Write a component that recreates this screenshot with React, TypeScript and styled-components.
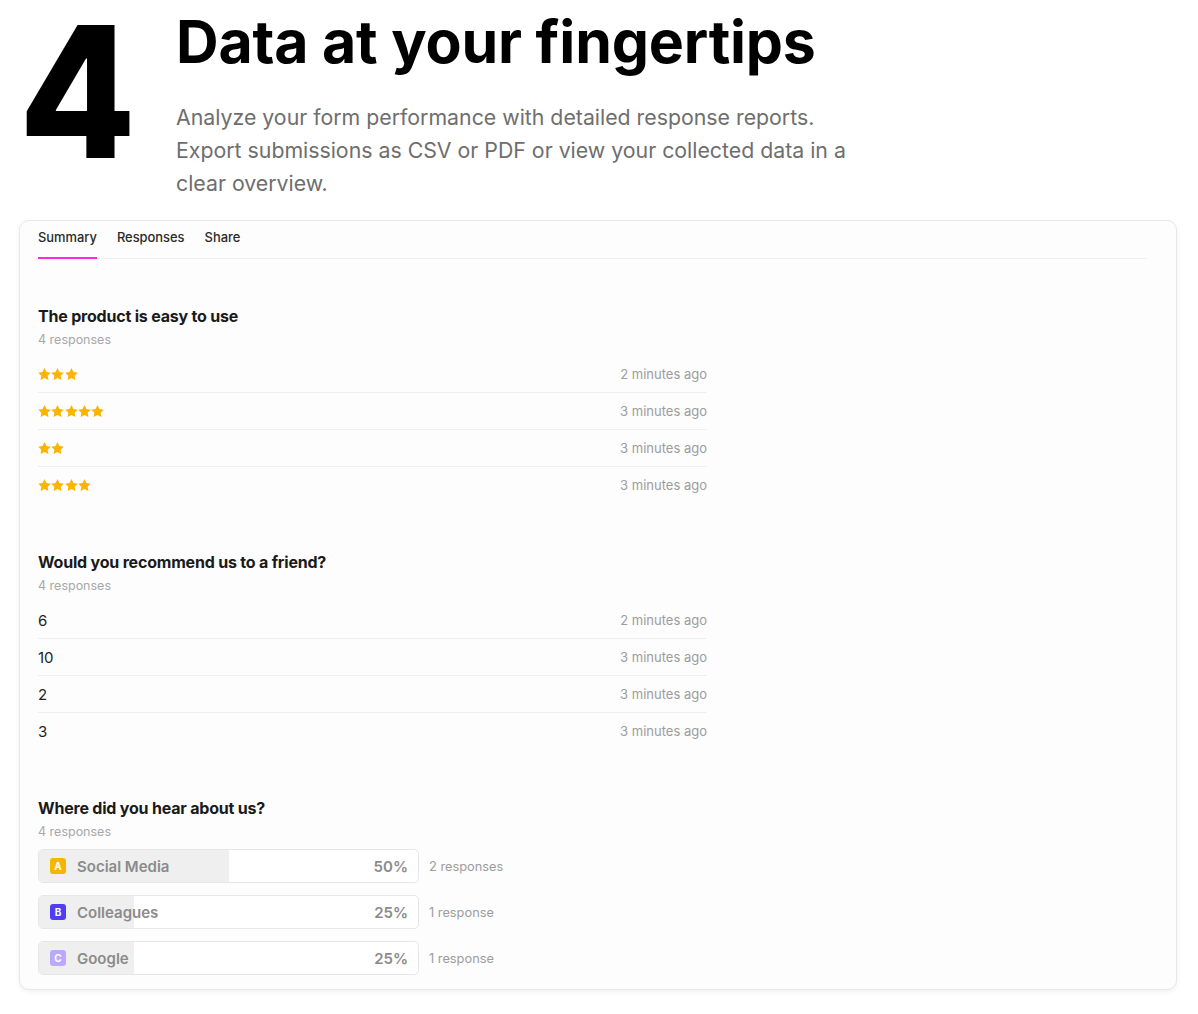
import { createGlobalStyle } from "styled-components";
import styled from "styled-components";

const GlobalStyle = createGlobalStyle`
  html, body {
    margin: 0;
    padding: 0;
    background: #ffffff;
    font-family: Inter, "Noto Sans", "Liberation Sans", sans-serif;
    -webkit-font-smoothing: antialiased;
  }
`;

const Page = styled.div`
  width: 1198px;
  height: 1014px;
  overflow: hidden;
`;

const Hero = styled.header`
  display: flex;
  align-items: flex-start;
  padding: 0 0 0 19px;
  height: 220px;
`;

const StepNumber = styled.div`
  width: 157px;
  font-size: 183px;
  font-weight: 800;
  line-height: 1;
  color: #000;
  transform: scaleX(0.93);
  transform-origin: left center;
`;

const HeroText = styled.div`
  display: flex;
  flex-direction: column;
  padding-top: 6px;
  max-width: 675px;
`;

const Title = styled.h1`
  margin: 0;
  font-size: 59px;
  line-height: 72px;
  font-weight: 700;
  letter-spacing: -0.2px;
  color: #000;
`;

const Lead = styled.p`
  margin: 23px 0 0;
  font-size: 21.3px;
  line-height: 33px;
  color: #6e6e6e;
  font-weight: 400;
`;

const Card = styled.section`
  margin-left: 19px;
  width: 1158px;
  height: 770px;
  box-sizing: border-box;
  border: 1px solid #e8e8e8;
  border-radius: 10px;
  background: #fdfdfd;
  box-shadow: 0 2px 5px rgba(0, 0, 0, 0.06);
  padding: 8px 29px 0 18px;
`;

const TabBar = styled.nav`
  display: flex;
  gap: 20px;
  border-bottom: 1px solid #f0f0f0;
`;

const Tab = styled.div<{ $active?: boolean }>`
  font-size: 12.9px;
  line-height: 18px;
  font-weight: 500;
  color: #2a2a2a;
  padding-bottom: 10px;
  margin-bottom: -1px;
  border-bottom: 2px solid ${(p) => (p.$active ? "#ff2ad8" : "transparent")};
`;

const Section = styled.div<{ $first?: boolean }>`
  width: 669px;
  margin-top: ${(p) => (p.$first ? "46px" : "48px")};
`;

const Question = styled.h3`
  margin: 0;
  font-size: 16px;
  line-height: 22px;
  font-weight: 700;
  color: #1a1a1a;
  letter-spacing: -0.2px;
`;

const Count = styled.div`
  margin-top: 4px;
  font-size: 12.5px;
  line-height: 18px;
  color: #a8a8a8;
`;

const Rows = styled.div`
  margin-top: 7px;
`;

const Row = styled.div`
  display: flex;
  align-items: center;
  justify-content: space-between;
  height: 36px;
  border-bottom: 1px solid #efefef;

  &:last-child {
    border-bottom: none;
  }
`;

const Value = styled.span`
  font-size: 15px;
  color: #1f1f1f;
`;

const Time = styled.span`
  font-size: 13px;
  color: #9c9c9c;
`;

const Stars = styled.span`
  display: flex;
  gap: 0.3px;
`;

const Bars = styled.div`
  margin-top: 8px;
  display: flex;
  flex-direction: column;
  gap: 12px;
`;

const BarLine = styled.div`
  display: flex;
  align-items: center;
  gap: 10px;
`;

const Bar = styled.div`
  position: relative;
  width: 381px;
  height: 34px;
  box-sizing: border-box;
  border: 1px solid #e6e6e6;
  border-radius: 5px;
  background: #ffffff;
  overflow: hidden;
`;

const BarFill = styled.div`
  position: absolute;
  left: 0;
  top: 0;
  bottom: 0;
  background: #efefef;
`;

const BarContent = styled.div`
  position: relative;
  display: flex;
  align-items: center;
  height: 100%;
  padding: 0 10px 0 11px;
`;

const Badge = styled.span<{ $color: string }>`
  display: inline-flex;
  align-items: center;
  justify-content: center;
  width: 16px;
  height: 16px;
  border-radius: 3px;
  background: ${(p) => p.$color};
  color: #fff;
  font-size: 10px;
  font-weight: 700;
  margin-right: 11px;
`;

const Label = styled.span`
  flex: 1;
  font-size: 15px;
  font-weight: 600;
  color: #8b8b8b;
`;

const Percent = styled.span`
  font-size: 15px;
  font-weight: 600;
  color: #8b8b8b;
`;

const BarNote = styled.span`
  font-size: 12.8px;
  color: #9c9c9c;
`;

function Star() {
  return (
    <svg width="13" height="13" viewBox="1.2 1.4 21.6 21.6">
      <path
        d="M12 1.6l3.2 6.6 7.2 1-5.2 5 1.3 7.2L12 18l-6.5 3.4 1.3-7.2-5.2-5 7.2-1z"
        fill="#fbb400"
      />
    </svg>
  );
}

const ratings = [
  { stars: 3, time: "2 minutes ago" },
  { stars: 5, time: "3 minutes ago" },
  { stars: 2, time: "3 minutes ago" },
  { stars: 4, time: "3 minutes ago" },
];

const scores = [
  { value: "6", time: "2 minutes ago" },
  { value: "10", time: "3 minutes ago" },
  { value: "2", time: "3 minutes ago" },
  { value: "3", time: "3 minutes ago" },
];

const sources = [
  { key: "A", label: "Social Media", pct: 50, color: "#f7b500", note: "2 responses" },
  { key: "B", label: "Colleagues", pct: 25, color: "#4f3ff0", note: "1 response" },
  { key: "C", label: "Google", pct: 25, color: "#bba9fb", note: "1 response" },
];

export default function App() {
  return (
    <Page>
      <GlobalStyle />
      <Hero>
        <StepNumber>4</StepNumber>
        <HeroText>
          <Title>Data at your fingertips</Title>
          <Lead>
            Analyze your form performance with detailed response reports.
            Export submissions as CSV or PDF or view your collected data in a
            clear overview.
          </Lead>
        </HeroText>
      </Hero>

      <Card>
        <TabBar>
          <Tab $active>Summary</Tab>
          <Tab>Responses</Tab>
          <Tab>Share</Tab>
        </TabBar>

        <Section $first>
          <Question>The product is easy to use</Question>
          <Count>4 responses</Count>
          <Rows>
            {ratings.map((r, i) => (
              <Row key={i}>
                <Stars>
                  {Array.from({ length: r.stars }).map((_, j) => (
                    <Star key={j} />
                  ))}
                </Stars>
                <Time>{r.time}</Time>
              </Row>
            ))}
          </Rows>
        </Section>

        <Section>
          <Question>Would you recommend us to a friend?</Question>
          <Count>4 responses</Count>
          <Rows>
            {scores.map((s, i) => (
              <Row key={i}>
                <Value>{s.value}</Value>
                <Time>{s.time}</Time>
              </Row>
            ))}
          </Rows>
        </Section>

        <Section>
          <Question>Where did you hear about us?</Question>
          <Count>4 responses</Count>
          <Bars>
            {sources.map((s) => (
              <BarLine key={s.key}>
                <Bar>
                  <BarFill style={{ width: `${s.pct}%` }} />
                  <BarContent>
                    <Badge $color={s.color}>{s.key}</Badge>
                    <Label>{s.label}</Label>
                    <Percent>{s.pct}%</Percent>
                  </BarContent>
                </Bar>
                <BarNote>{s.note}</BarNote>
              </BarLine>
            ))}
          </Bars>
        </Section>
      </Card>
    </Page>
  );
}
